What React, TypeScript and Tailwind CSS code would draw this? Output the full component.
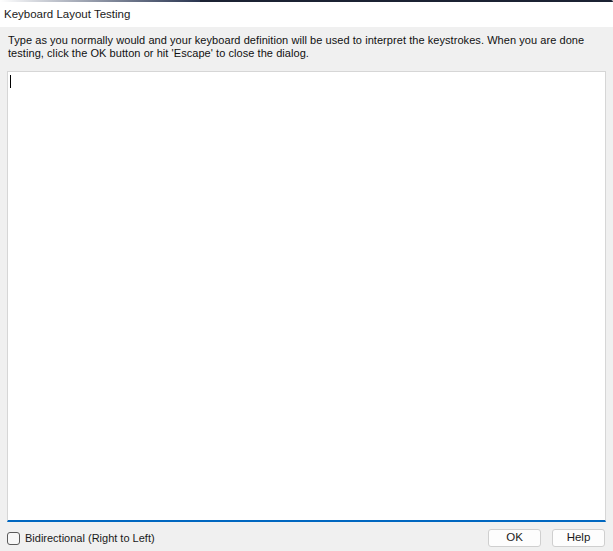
export default function App() {
  return (
    <div className="w-[613px] h-[551px] flex flex-col bg-[#f0f0f0] overflow-hidden font-['Liberation_Sans',Arial,sans-serif] text-black">
      {/* window top edge */}
      <div className="h-[2px] w-full flex">
        <div className="w-[200px] bg-gradient-to-r from-white to-[#2a3550]" />
        <div className="flex-1 bg-[#1b2233] rounded-tr-[6px]" />
      </div>
      <div className="h-[25px] bg-white flex items-center px-[4px] text-[11.5px] text-[#1a1a1a]">
        Keyboard Layout Testing
      </div>
      <div className="flex-1 flex flex-col px-[7px]">
        <p className="pt-[7px] pl-[1px] text-[11px] leading-[13px] tracking-[0.06px] text-[#111]">
          Type as you normally would and your keyboard definition will be used to interpret the keystrokes. When you are done
          testing, click the OK button or hit 'Escape' to close the dialog.
        </p>
        <div className="mt-[11px] w-[599px] h-[451px] bg-white border border-[#d6d6d6] border-b-2 border-b-[#0067c0] pt-[3px] pl-[2px]">
          <div className="w-px h-[13px] bg-black" />
        </div>
        <div className="flex items-center justify-between pt-[7px]">
          <label className="flex items-center gap-[5px] text-[11px] text-[#1a1a1a]">
            <span className="w-[13px] h-[13px] rounded-[3px] border border-[#5a5a5a] bg-[#f7f7f7]" />
            Bidirectional (Right to Left)
          </label>
          <div className="flex gap-[11px] pr-[1px]">
            <button className="w-[53px] h-[18px] rounded-[3px] border border-[#cfcfcf] bg-[#fdfdfd] text-[11.5px] leading-none text-[#1a1a1a]">
              OK
            </button>
            <button className="w-[53px] h-[18px] rounded-[3px] border border-[#cfcfcf] bg-[#fdfdfd] text-[11.5px] leading-none text-[#1a1a1a]">
              Help
            </button>
          </div>
        </div>
      </div>
    </div>
  )
}
